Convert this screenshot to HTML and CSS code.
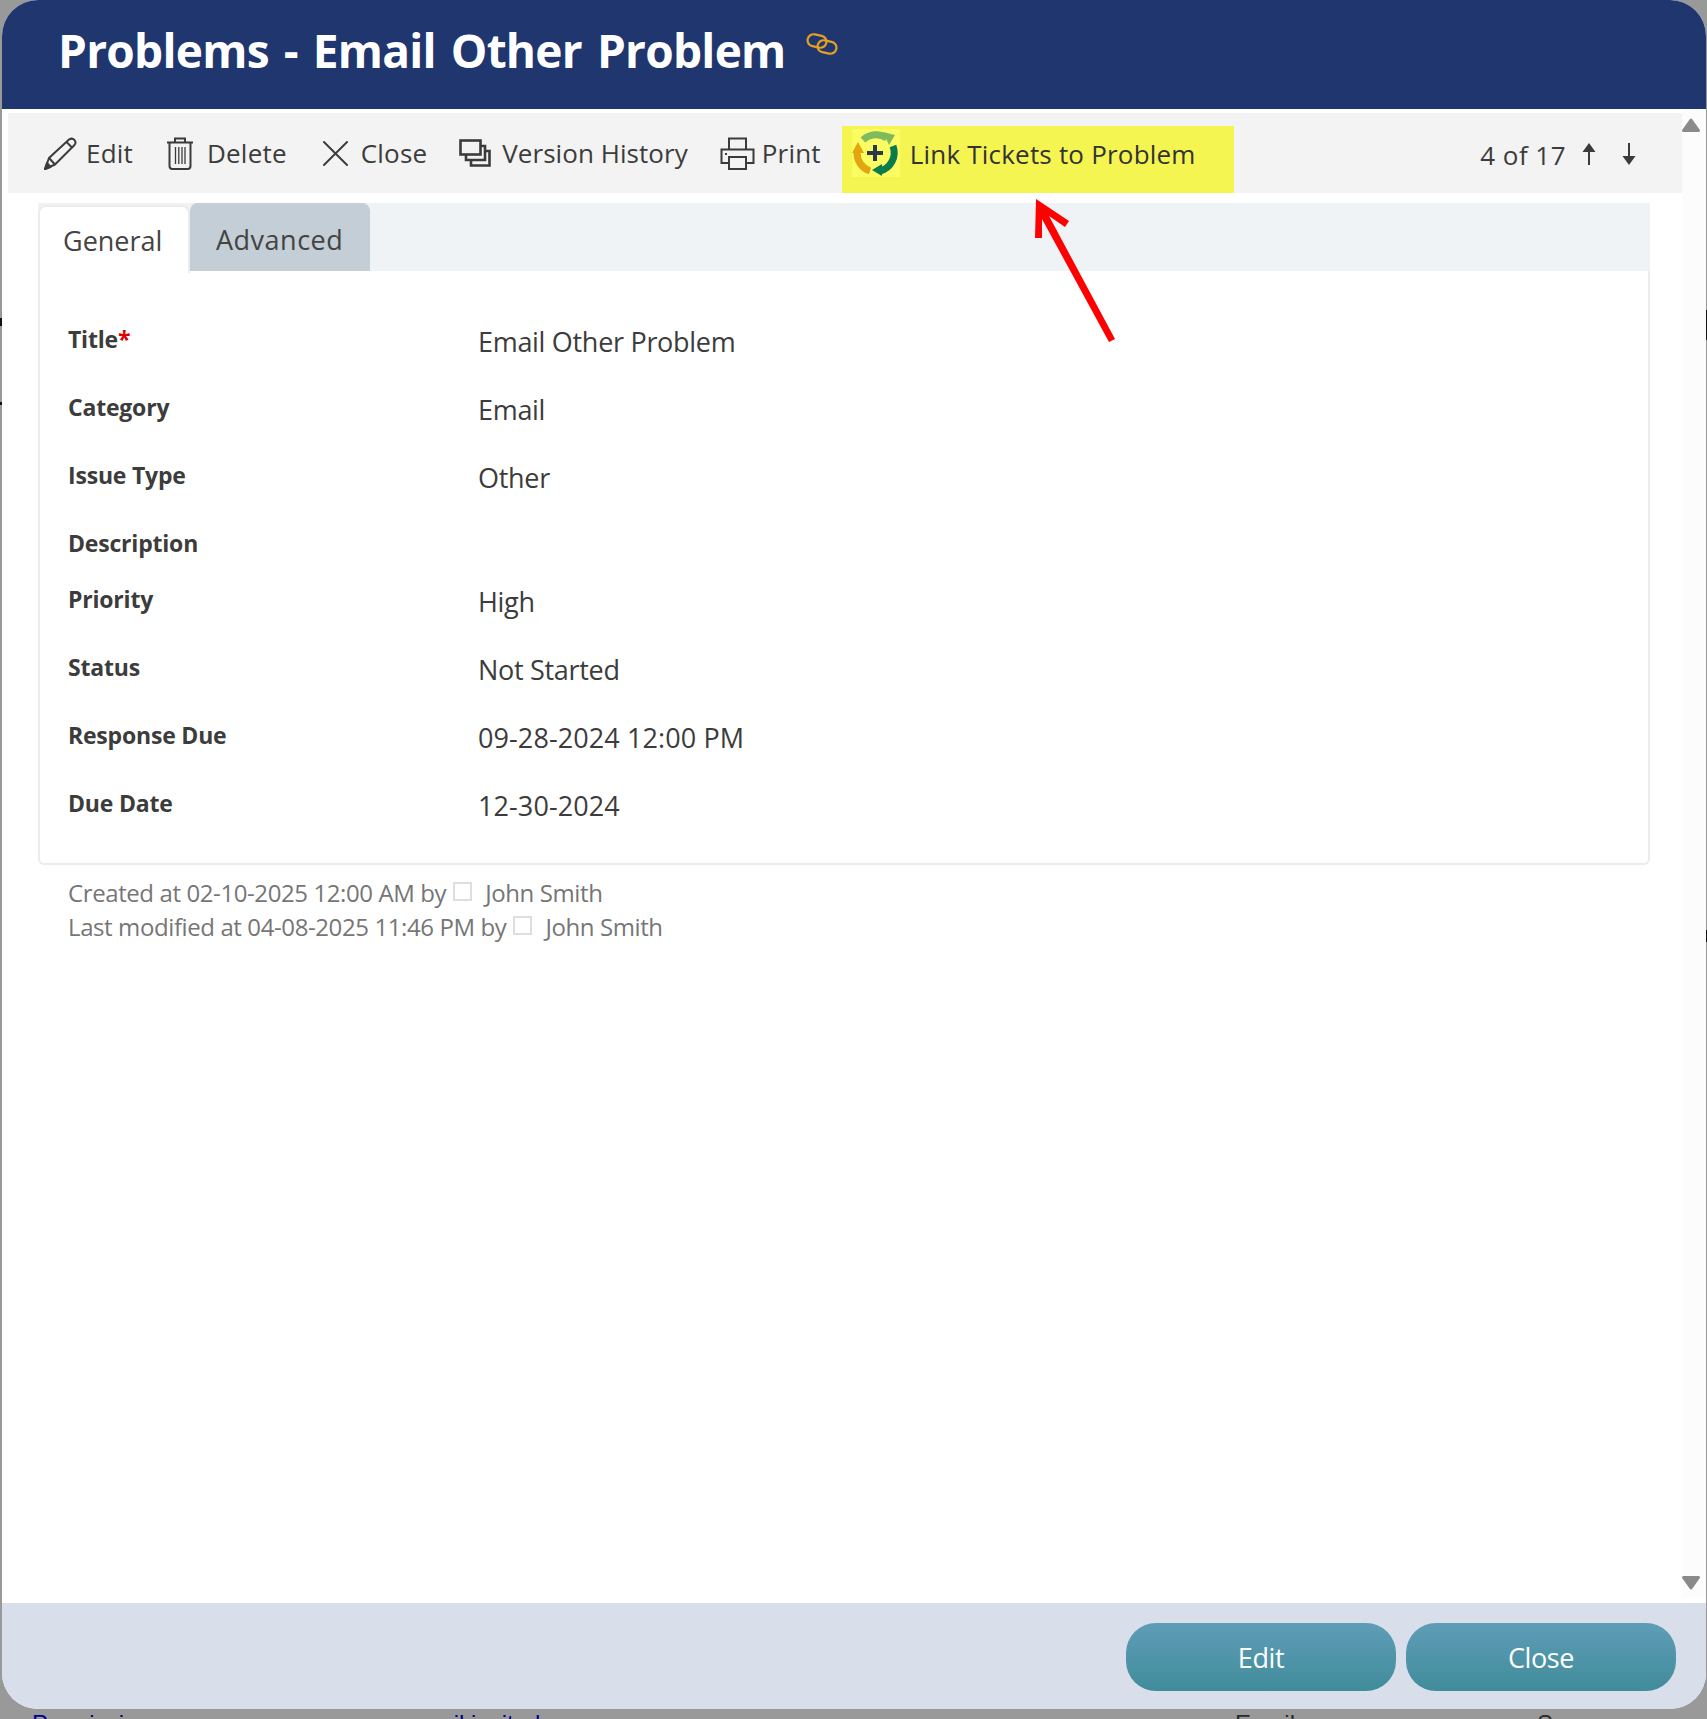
FILE: index.html
```html
<!DOCTYPE html>
<html lang="en">
<head>
<meta charset="utf-8">
<title>Problems - Email Other Problem</title>
<link rel="stylesheet" href="styles.css">
</head>
<body>
<div class="page">
  <span class="edge-mark mark-a"></span>
  <span class="edge-mark mark-b"></span>
  <span class="edge-mark mark-c"></span>
  <span class="edge-mark mark-d"></span>
  <div class="modal">
    <header class="modal-header">
      <h1 class="modal-title">Problems - Email Other Problem</h1>
      <svg class="chain" viewBox="0 0 32 22" width="32" height="22" fill="none" stroke="#e5a023" stroke-width="2.2">
        <rect x="1.5" y="2" width="19" height="12" rx="6" transform="rotate(12 11 8)"/>
        <rect x="11.5" y="8" width="19" height="12" rx="6" transform="rotate(12 21 14)"/>
      </svg>
    </header>
    <div class="modal-body">
      <main class="content">
        <div class="toolbar">
          <div class="tool tool-edit">
            <svg class="ico" width="33" height="33" viewBox="0 0 33 33" fill="none" stroke="#3b3b3b" stroke-width="2" stroke-linejoin="round"><path d="M1 32 L5 21 L25 2.5 Q28 0.5 30.5 3 Q32.5 5.5 30.5 8 L11 27.5 Z"/><path d="M5 21 L11 27.5"/><path d="M22.5 5 L28.5 11"/><path d="M1 32 L3 26 L6.5 30 Z" fill="#3b3b3b"/></svg>
            <span class="tool-text">Edit</span>
          </div>
          <div class="tool tool-delete">
            <svg class="ico" width="28" height="33" viewBox="0 0 28 33" fill="none" stroke="#3b3b3b" stroke-width="2"><path d="M1 5.5 H27"/><path d="M9 5 V1.5 H19 V5"/><path d="M3.5 5.5 V29 Q3.5 32 6.5 32 H21.5 Q24.5 32 24.5 29 V5.5"/><path d="M9.5 10 V27 M12.8 10 V27 M16 10 V27 M19 10 V27" stroke-width="1.3"/></svg>
            <span class="tool-text">Delete</span>
          </div>
          <div class="tool tool-close">
            <svg class="ico" width="25" height="25" viewBox="0 0 26 26" fill="none" stroke="#3b3b3b" stroke-width="2" stroke-linecap="round"><path d="M1 1 L25 25 M25 1 L1 25"/></svg>
            <span class="tool-text">Close</span>
          </div>
          <div class="tool tool-history">
            <svg class="ico" width="32" height="28" viewBox="0 0 32 28" fill="none" stroke="#3b3b3b" stroke-width="2.6"><rect x="1.5" y="1.5" width="20" height="14"/><path d="M21.5 7 H26 V21 H7 V15.5"/><path d="M26 12 H30.5 V26.5 H12 V21"/></svg>
            <span class="tool-text">Version History</span>
          </div>
          <div class="tool tool-print">
            <svg class="ico" width="35" height="33" viewBox="0 0 35 33" fill="none" stroke="#3b3b3b" stroke-width="2"><path d="M9 12 V1.5 H26 V12"/><path d="M9 26 H1.5 V12.5 H33.5 V26 H26"/><rect x="9" y="20" width="17" height="12"/><path d="M5 17 H7" stroke-width="2"/></svg>
            <span class="tool-text">Print</span>
          </div>
          <div class="tool tool-link">
            <span class="link-swatch">
              <svg width="48" height="48" viewBox="0 0 48 48" fill="none">
                <path d="M11 11 A19 19 0 0 1 35 9" stroke="#7fba5c" stroke-width="7"/>
                <path d="M31 3 L43 6 L37 16 Z" fill="#7fba5c"/>
                <path d="M41 17 A19 19 0 0 1 28 42" stroke="#0c7b4c" stroke-width="7"/>
                <path d="M30 35 L20 41 L30 47 Z" fill="#0c7b4c"/>
                <path d="M18 42 A19 19 0 0 1 5 24" stroke="#e2a40f" stroke-width="7"/>
                <path d="M0 24 L6 13 L12 24 Z" fill="#e2a40f"/>
                <path d="M23 16 V32 M15 24 H31" stroke="#2b3a4a" stroke-width="4"/>
              </svg>
            </span>
            <span class="tool-text">Link Tickets to Problem</span>
          </div>
          <div class="pager">
            <span class="pager-text">4 of 17</span>
            <svg class="pager-arrow" width="14" height="22" viewBox="0 0 14 22"><path d="M7 0 L13.5 9 H8 V22 H6 V9 H0.5 Z" fill="#3b3b3b"/></svg>
            <svg class="pager-arrow" width="14" height="22" viewBox="0 0 14 22"><path d="M7 22 L13.5 13 H8 V0 H6 V13 H0.5 Z" fill="#3b3b3b"/></svg>
          </div>
        </div>
        <div class="tabs">
          <div class="tab tab-active">General</div>
          <div class="tab tab-idle">Advanced</div>
        </div>
        <section class="panel">
          <div class="row"><div class="label">Title<span class="req">*</span></div><div class="value">Email Other Problem</div></div>
          <div class="row"><div class="label">Category</div><div class="value">Email</div></div>
          <div class="row"><div class="label">Issue Type</div><div class="value">Other</div></div>
          <div class="row row-empty"><div class="label">Description</div></div>
          <div class="row"><div class="label">Priority</div><div class="value">High</div></div>
          <div class="row"><div class="label">Status</div><div class="value">Not Started</div></div>
          <div class="row"><div class="label">Response Due</div><div class="value value-date">09-28-2024 12:00 PM</div></div>
          <div class="row"><div class="label">Due Date</div><div class="value value-date">12-30-2024</div></div>
        </section>
        <div class="meta">
          <div class="meta-line">Created at 02-10-2025 12:00 AM by<span class="broken"></span>John Smith</div>
          <div class="meta-line">Last modified at 04-08-2025 11:46 PM by<span class="broken"></span>John Smith</div>
        </div>
      </main>
      <aside class="scrollbar">
        <svg class="tri" width="18" height="14" viewBox="0 0 18 14"><path d="M9 2 L16.5 12.5 H1.5 Z" fill="#8a8a8a" stroke="#8a8a8a" stroke-width="3" stroke-linejoin="round"/></svg>
        <svg class="tri" width="18" height="14" viewBox="0 0 18 14"><path d="M9 12 L16.5 1.5 H1.5 Z" fill="#8a8a8a" stroke="#8a8a8a" stroke-width="3" stroke-linejoin="round"/></svg>
      </aside>
    </div>
    <footer class="modal-footer">
      <button class="btn">Edit</button>
      <button class="btn">Close</button>
    </footer>
  </div>
  <div class="behind">
    <span class="behind-a">Permissions</span>
    <span class="behind-b">email invited</span>
    <span class="behind-c">Email</span>
    <span class="behind-d">S</span>
  </div>
  <svg class="callout" width="90" height="150" viewBox="0 0 90 150">
    <path d="M5 4 L4 43 L11 43 L11 24 L78 147 L84 144 L18 21 L34 32 L38 26 Z" fill="#ff0000"/>
  </svg>
</div>
</body>
</html>
```
FILE: styles.css
```css
* { box-sizing: border-box; }
html, body { margin: 0; padding: 0; }
body {
  background: #999999;
  font-family: "Open Sans", "Noto Sans", sans-serif;
  color: #3c3c3c;
}
.page {
  position: relative;
  width: 1707px;
  height: 1719px;
  overflow: hidden;
  padding-left: 2px;
}
.edge-mark { position: absolute; background: #111; }
.mark-a { left: 0; top: 318px; width: 2px; height: 8px; }
.mark-b { left: 0; top: 402px; width: 2px; height: 3px; }
.mark-c { right: 0; top: 310px; width: 1px; height: 30px; }
.mark-d { right: 0; top: 930px; width: 1px; height: 12px; }

.modal {
  width: 1704px;
  height: 1709px;
  border-radius: 36px;
  overflow: hidden;
  background: #fff;
  display: flex;
  flex-direction: column;
}
.modal-header {
  height: 109px;
  flex: none;
  background: #20366f;
  display: flex;
  align-items: flex-start;
  padding-left: 56px;
  color: #fff;
}
.modal-title {
  margin: 0;
  padding-top: 18px;
  font-size: 46px;
  line-height: 64px;
  font-weight: 700;
  letter-spacing: -0.73px;
  word-spacing: 3.7px;
  color: #fff;
}
.chain { margin-left: 20px; margin-top: 33px; }

.modal-body { flex: 1; display: flex; min-height: 0; }
.content { flex: 1; min-width: 0; padding: 4px 0 0 6px; }
.scrollbar {
  flex: none;
  width: 24px;
  background: #fcfcfc;
  display: flex;
  flex-direction: column;
  justify-content: space-between;
  padding: 9px 6px 8px 0;
  align-items: center;
  margin-bottom: 5px;
}
.tri { display: block; }

.toolbar {
  height: 80px;
  background: #f3f3f3;
  display: flex;
  align-items: flex-end;
  padding-left: 36px;
}
.tool {
  display: flex;
  align-items: center;
  height: 67px;
  padding-bottom: 13px;
  font-size: 26px;
  letter-spacing: 0.2px;
  color: #3c3c3c;
  white-space: nowrap;
}
.tool-text { display: block; margin-left: 9px; }
.tool-delete { margin-left: 33px; }
.tool-delete .tool-text { margin-left: 13px; }
.tool-close { margin-left: 36px; }
.tool-close .tool-text { margin-left: 13px; }
.tool-history { margin-left: 32px; letter-spacing: 0.05px; }
.tool-history .tool-text { margin-left: 11px; }
.tool-print { margin-left: 32px; }
.tool-print .tool-text { margin-left: 7px; }
.tool-link {
  margin-left: 21px;
  width: 392px;
  background: #f5f552;
  padding: 0 0 0 10px;
  align-items: flex-start;
  color: #333;
}
.link-swatch { display: block; width: 48px; height: 48px; margin-top: 3px; background: #fbfb62; }
.tool-link .tool-text { margin-left: 10px; line-height: 48px; margin-top: 4px; }
.pager {
  margin-left: auto;
  margin-right: 46px;
  height: 67px;
  display: flex;
  align-items: center;
  padding-bottom: 10px;
  font-size: 26px;
  letter-spacing: 0.45px;
}
.pager-text { margin-right: 16px; }
.pager-arrow { display: block; margin-top: -1px; }
.pager-arrow + .pager-arrow { margin-left: 26px; }

.tabs {
  margin: 10px 0 0 30px;
  width: 1612px;
  height: 68px;
  background: #eff3f6;
  display: flex;
  align-items: flex-end;
}
.tab {
  font-size: 27px;
  color: #444;
}
.tab-active {
  width: 152px;
  height: 68px;
  margin-bottom: -2px;
  padding: 15px 0 0 23px;
  background: #fff;
  border: 2px solid #ececec;
  border-bottom: 0;
  border-radius: 8px 8px 0 0;
}
.tab-idle {
  width: 180px;
  height: 68px;
  padding: 18px 0 0 26px;
  background: #c3ced6;
  border-radius: 8px 8px 0 0;
  letter-spacing: 0.5px;
}
.panel {
  margin-left: 30px;
  width: 1612px;
  height: 594px;
  border: 2px solid #ececec;
  border-top: 0;
  border-radius: 0 0 6px 6px;
  padding: 52px 0 0 28px;
  background: #fff;
}
.row {
  display: flex;
  align-items: flex-start;
  height: 68px;
}
.row-empty { height: 56px; }
.label {
  width: 410px;
  flex: none;
  margin-top: -2px;
  font-size: 23px;
  line-height: 36px;
  font-weight: 700;
  letter-spacing: -0.2px;
  color: #3c3c3c;
}
.req { color: #e00000; }
.value {
  margin-top: 1px;
  font-size: 27px;
  line-height: 36px;
  letter-spacing: -0.3px;
  color: #3c3c3c;
}
.value-date { letter-spacing: 0.1px; }
.meta {
  padding: 11px 0 0 60px;
  font-size: 24px;
  line-height: 34px;
  letter-spacing: -0.4px;
  color: #767676;
}
.meta-line { display: flex; align-items: center; white-space: nowrap; }
.broken {
  width: 19px;
  height: 19px;
  margin: -4px 13px 0 7px;
  border: 2px solid #dedede;
  display: block;
}

.modal-footer {
  height: 106px;
  flex: none;
  background: #d9dfea;
  display: flex;
  justify-content: flex-end;
  gap: 10px;
  padding: 20px 30px 0 0;
}
.btn {
  width: 270px;
  height: 68px;
  border: 0;
  border-radius: 30px;
  background: linear-gradient(#5f9db7, #408c9b);
  color: #fff;
  font-family: inherit;
  font-size: 27px;
  letter-spacing: -0.4px;
}
.behind {
  position: relative;
  height: 10px;
  overflow: hidden;
  font-family: "Liberation Sans", sans-serif;
  font-size: 24px;
  line-height: 28px;
}
.behind span { position: absolute; top: 1px; white-space: nowrap; }
.behind-a { left: 30px; color: #000090; }
.behind-b { left: 405px; color: #000090; }
.behind-c { left: 1233px; color: #2a2a2a; }
.behind-d { left: 1535px; color: #2a2a2a; }
.callout { position: absolute; left: 1031px; top: 195px; }
```
